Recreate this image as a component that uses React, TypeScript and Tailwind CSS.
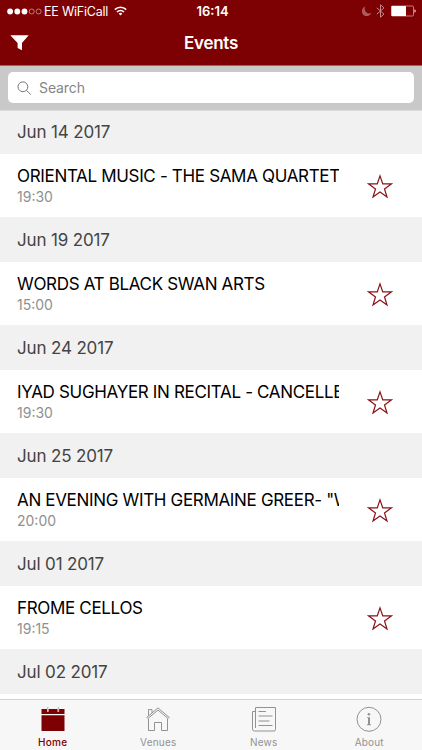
import type { ReactNode } from "react";

interface EventGroup {
  date: string;
  title?: string;
  time?: string;
}

const groups: EventGroup[] = [
  { date: "Jun 14 2017", title: "ORIENTAL MUSIC - THE SAMA QUARTET", time: "19:30" },
  { date: "Jun 19 2017", title: "WORDS AT BLACK SWAN ARTS", time: "15:00" },
  { date: "Jun 24 2017", title: "IYAD SUGHAYER IN RECITAL - CANCELLE", time: "19:30" },
  { date: "Jun 25 2017", title: 'AN EVENING WITH GERMAINE GREER- "W', time: "20:00" },
  { date: "Jul 01 2017", title: "FROME CELLOS", time: "19:15" },
  { date: "Jul 02 2017" },
];

function StatusBar() {
  return (
    <div className="grid h-[22px] grid-cols-[1fr_auto_1fr] items-center pl-[7px] pr-[6px] text-[12.5px] leading-none">
      <div className="flex items-center">
        <svg width="35" height="7" viewBox="0 0 35 7">
          <circle cx="3.1" cy="3.5" r="2.9" fill="#fff" />
          <circle cx="10.3" cy="3.5" r="2.9" fill="#fff" />
          <circle cx="17.5" cy="3.5" r="2.9" fill="#fff" />
          <circle cx="24.7" cy="3.5" r="2.5" fill="none" stroke="#d9b0b0" strokeWidth="0.7" />
          <circle cx="31.6" cy="3.5" r="2.5" fill="none" stroke="#d9b0b0" strokeWidth="0.7" />
        </svg>
        <span className="ml-[2px] whitespace-nowrap pt-[2px] tracking-[-0.22px]">EE WiFiCall</span>
        <svg className="ml-[6px]" width="13" height="10" viewBox="0 0 13 10" fill="none" stroke="#fff" strokeWidth="1.6">
          <path d="M0.8 3.6a8.2 8.2 0 0 1 11.4 0" />
          <path d="M3 6a5 5 0 0 1 7 0" />
          <path d="M6.5 9.6 4.6 7.6a2.7 2.7 0 0 1 3.8 0z" fill="#fff" stroke="none" />
        </svg>
      </div>
      <span className="pl-[2px] text-[13px] font-semibold">16:14</span>
      <div className="flex items-center justify-end">
        <svg width="10" height="10" viewBox="0 0 10 10">
          <path d="M3.2 0.6A4.9 4.9 0 1 0 9.3 7 4.7 4.7 0 0 1 3.2 0.6z" fill="#ad5c5c" />
        </svg>
        <svg className="ml-[4px]" width="9" height="14" viewBox="0 0 9 14" fill="none" stroke="#c48a8a" strokeWidth="1">
          <path d="M0.8 3.8 8 10.1 4.5 13.2V0.8L8 3.9 0.8 10.2" />
        </svg>
        <svg className="ml-[6px]" width="25" height="12" viewBox="0 0 25 12">
          <rect x="0.5" y="1" width="22" height="10" rx="1" fill="none" stroke="#d08a8a" strokeWidth="0.9" />
          <rect x="0.5" y="1" width="14.5" height="10" rx="0.6" fill="#fff" />
          <path d="M23.5 4.3a1.8 1.8 0 0 1 0 3.4z" fill="#fff" />
        </svg>
      </div>
    </div>
  );
}

function Star() {
  return (
    <svg width="26" height="25" viewBox="0 0 26 25" fill="none" stroke="#8a1216" strokeWidth="1.2" strokeLinejoin="miter">
      <path d="M13 1.9 15.75 9.9H24.3L17.5 14.9 20 23 13 18.1 6 23 8.5 14.9 1.7 9.9H10.25z" />
    </svg>
  );
}

function Group({ date, title, time }: EventGroup) {
  return (
    <section className="shrink-0">
      <h2 className="flex h-[45px] items-center bg-[#f1f1f1] pl-[17px] pt-[3px] text-[17px] tracking-[-0.15px] text-[#444]">
        {date}
      </h2>
      {title && (
        <div className="flex h-[63px] items-center">
          <div className="ml-[17px] h-full w-[322px] overflow-hidden whitespace-nowrap pt-[11px]">
            <div className="text-[17px] leading-[22px] tracking-[-0.33px] text-black">{title}</div>
            <div className="text-[14px] leading-[19px] text-[#909090]">{time}</div>
          </div>
          <div className="ml-[28px] mt-[2px]">
            <Star />
          </div>
        </div>
      )}
    </section>
  );
}

function Tab({ label, active, children }: { label: string; active?: boolean; children: ReactNode }) {
  return (
    <div
      className={`flex flex-1 flex-col items-center pt-[6px] text-[10px] leading-[12px] ${
        active ? "font-medium tracking-[0.3px] text-[#7d0002]" : "tracking-[0.2px] text-[#929292]"
      }`}
    >
      <svg width="26" height="26" viewBox="0 0 26 26" fill="none" stroke="currentColor" strokeWidth="1">
        {children}
      </svg>
      <span className="mt-[4px]">{label}</span>
    </div>
  );
}

export default function App() {
  return (
    <div className="flex h-[750px] w-[422px] flex-col overflow-hidden bg-white font-['Inter',sans-serif]">
      <header className="h-[66px] shrink-0 border-b border-[#b05a5c] bg-[#7d0002] text-white">
        <StatusBar />
        <div className="grid h-[42px] grid-cols-[1fr_auto_1fr] items-center">
          <svg className="ml-[10px]" width="19" height="16" viewBox="0 0 19 16">
            <path d="M0.3 0.2H18.7L12 8V15.2L7.6 13.1V8z" fill="#fff" />
          </svg>
          <h1 className="pt-[2px] text-[17px] font-semibold tracking-[-0.25px]">Events</h1>
        </div>
      </header>

      <div className="z-10 h-[45px] shrink-0 border-b border-[#dcdcdc] bg-[#c9c9c9] px-[8px] pt-[6px]">
        <div className="flex h-[31px] items-center rounded-[5px] bg-white pl-[9px]">
          <svg className="mt-[2px]" width="15" height="15" viewBox="0 0 15 15" fill="none" stroke="#777" strokeWidth="1">
            <circle cx="5.9" cy="5.8" r="4.9" />
            <path d="M9.4 9.3 13.8 13.6" />
          </svg>
          <span className="ml-[7px] text-[14px] tracking-[-0.1px] text-[#858585]">Search</span>
        </div>
      </div>

      <main className="-mt-[2px] flex min-h-0 flex-1 flex-col overflow-hidden">
        {groups.map((group) => (
          <Group key={group.date} {...group} />
        ))}
      </main>

      <nav className="flex h-[51px] shrink-0 border-t border-[#d2d2d2] bg-[#f7f7f7]">
        <Tab label="Home" active>
          <path d="M1.5 3H24.5V8H1.5zM1.5 9.2H24.5V25H1.5z" fill="currentColor" stroke="none" />
          <path d="M7.8 0.8V5.8M18.3 0.8V5.8" stroke="#f7f7f7" strokeWidth="1.6" />
          <path d="M7.8 1V5.5M18.3 1V5.5" stroke="#b98080" strokeWidth="0.7" />
        </Tab>
        <Tab label="Venues">
          <path d="M3.5 13V24.5H9.5V16.5H16.5V24.5H22.5V13" />
          <path d="M1.8 11.4 13 1.9 24.2 11.4 23.1 12.5 13 4.1 2.9 12.5z" />
          <path d="M3.5 9.7V3.5H7V6.8" />
        </Tab>
        <Tab label="News">
          <path d="M4.5 1.5H24.5V23.5A1.5 1.5 0 0 1 23 25H3.5A2 2 0 0 1 1.5 23V5.5H4.5" />
          <path d="M4.5 1.5V22" />
          <path d="M7.5 5.5H15M7.5 10H21.5M7.5 15H18.5M7.5 19.5H21.5" strokeWidth="1.2" />
        </Tab>
        <Tab label="About">
          <circle cx="13" cy="13.3" r="12" />
          <circle cx="12.9" cy="8.3" r="1.3" fill="currentColor" stroke="none" />
          <path d="M11 11.2H14V18.3H15V19.2H11V18.3H12V12.1H11z" fill="currentColor" stroke="none" />
        </Tab>
      </nav>
    </div>
  );
}
